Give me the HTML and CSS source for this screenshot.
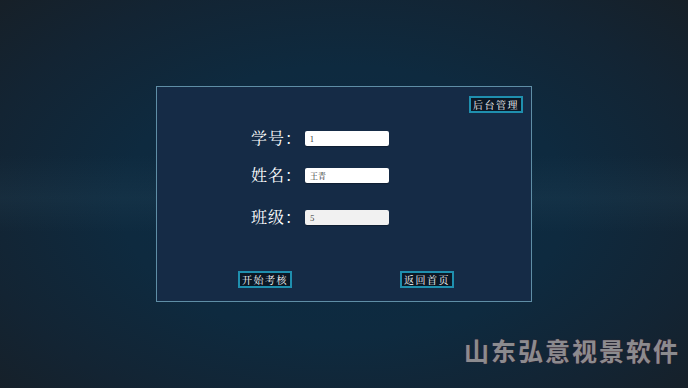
FILE: index.html
```html
<!DOCTYPE html>
<html lang="zh-CN">

<head>
    <meta charset="UTF-8">
    <meta name="viewport" content="width=device-width, initial-scale=1.0">
    <title>考核登录</title>
    <link rel="stylesheet" href="styles.css">
</head>

<body>
    <div class="panel">
        <div class="top-bar">
            <button class="btn">后台管理</button>
        </div>
        <form class="login-form">
            <div class="row">
                <label>学号：</label>
                <input class="field" type="text" value="1">
            </div>
            <div class="row row-name">
                <label>姓名：</label>
                <input class="field" type="text" value="王青">
            </div>
            <div class="row row-class">
                <label>班级：</label>
                <input class="field field-active" type="text" value="5" autofocus>
            </div>
        </form>
        <div class="actions">
            <button class="btn">开始考核</button>
            <button class="btn">返回首页</button>
        </div>
    </div>
    <div class="brand">山东弘意视景软件</div>
</body>

</html>
```

FILE: styles.css
```css
html,
body {
    height: 100%;
}

body {
    margin: 0;
    padding-top: 86px;
    box-sizing: border-box;
    background:
        linear-gradient(to bottom, rgba(60, 100, 120, 0) 40%, rgba(60, 100, 120, 0.12) 51%, rgba(60, 100, 120, 0) 60%),
        radial-gradient(ellipse 72% 78% at 50% 52%, #0c2b43 0%, #0e2a3f 45%, #132433 75%, #171f26 100%);
    font-family: "Noto Serif CJK SC", "Noto Sans CJK SC", serif;
    color: #FFFFFF;
    overflow: hidden;
}

.panel {
    width: 376px;
    height: 216px;
    margin: 0 auto;
    box-sizing: border-box;
    border: 1px solid #5f8ea6;
    background-color: #152b46;
    padding: 9px 8px 13px;
    display: flex;
    flex-direction: column;
}

.top-bar {
    display: flex;
    justify-content: flex-end;
}

.btn {
    width: 54px;
    height: 17px;
    box-sizing: border-box;
    border: 2px solid #1f8fae;
    background-color: #0b1826;
    color: #FFFFFF;
    font-family: "Noto Serif CJK SC", "Noto Sans CJK SC", serif;
    font-size: 10px;
    letter-spacing: 1.5px;
    padding: 0;
    line-height: 13px;
    cursor: pointer;
}

.login-form {
    margin: 17px 0 0 86px;
}

.row {
    display: flex;
    align-items: center;
    height: 16px;
}

.row-name {
    margin-top: 21px;
}

.row-class {
    margin-top: 26px;
}

.row label {
    width: 54px;
    font-size: 16px;
    line-height: 16px;
    letter-spacing: 1px;
}

.field {
    width: 84px;
    height: 15px;
    box-sizing: border-box;
    border: none;
    border-radius: 2px;
    background-color: #FFFFFF;
    font-family: "Noto Serif CJK SC", "Noto Sans CJK SC", serif;
    font-size: 8px;
    color: #2a2a2a;
    padding: 0 5px;
    outline: none;
    box-shadow: 0 1px 1px rgba(0, 0, 0, 0.3);
}

.field-active {
    background-color: #f1f1f1;
}

.actions {
    margin-top: auto;
    padding-left: 73px;
    display: flex;
    gap: 108px;
}

.brand {
    margin-top: 33px;
    padding-right: 8px;
    text-align: right;
    font-family: "Noto Sans CJK SC", sans-serif;
    font-weight: bold;
    font-size: 25px;
    line-height: 30px;
    letter-spacing: 2px;
    color: #8b8b8f;
    text-shadow: 0 0 1px #6a2a30;
}
```
